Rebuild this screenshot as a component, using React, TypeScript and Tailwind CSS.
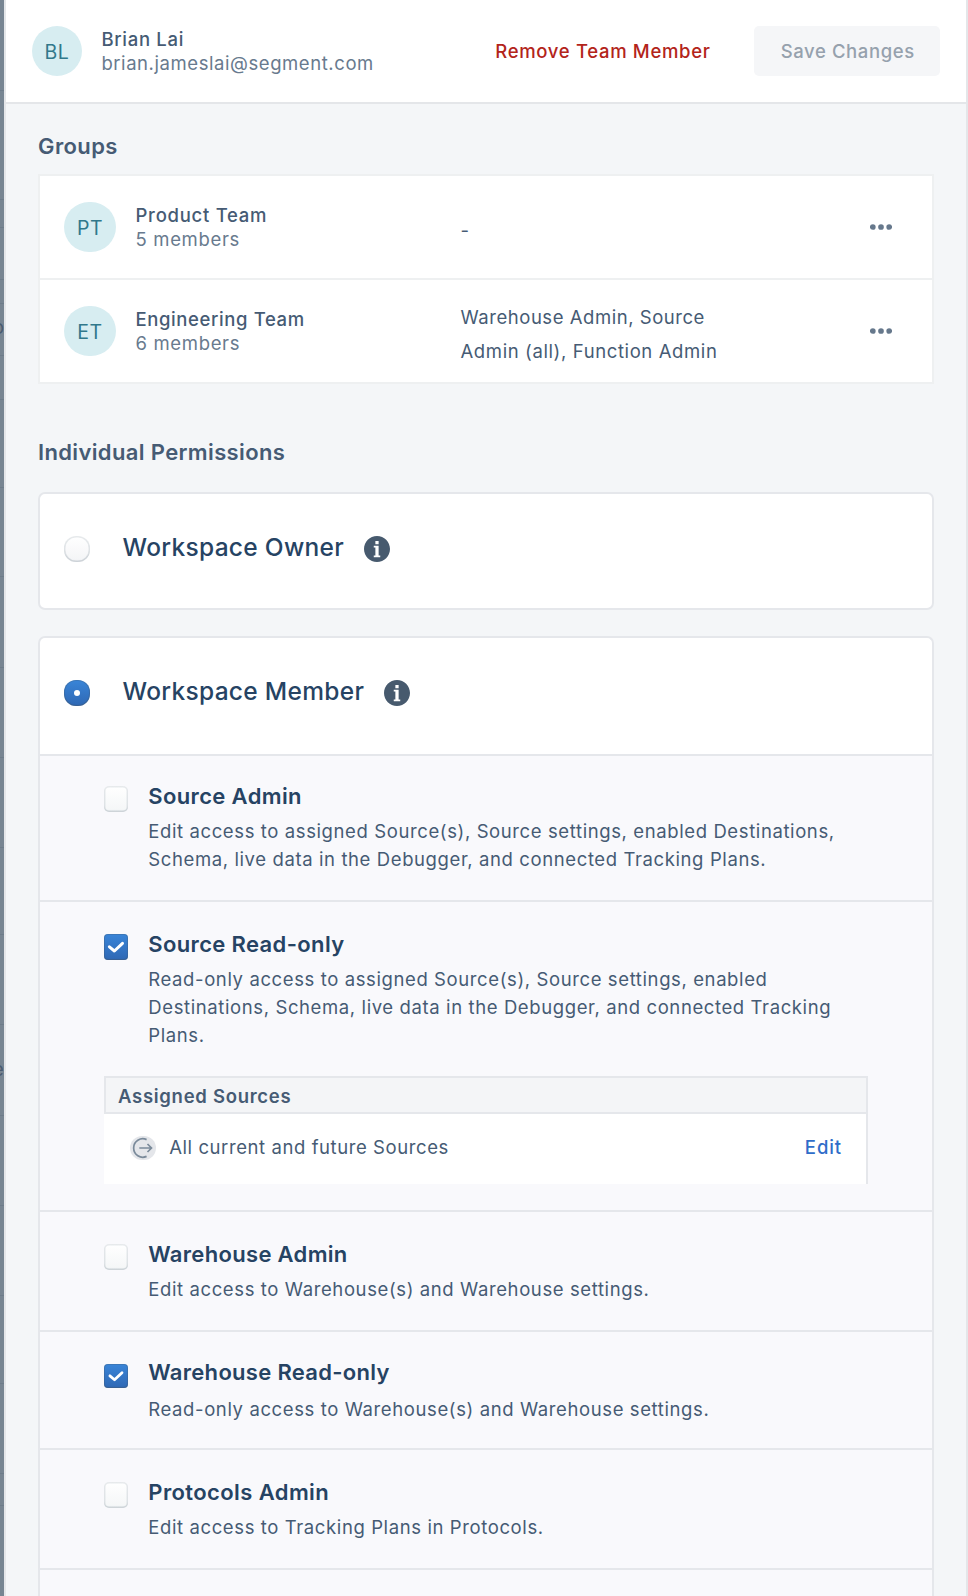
import type { ReactNode } from "react";

const dividers = [90, 199, 227, 279, 303, 355, 399, 487, 576, 667, 757, 847, 934, 1024, 1115, 1205, 1295, 1383, 1473, 1505];

function Backdrop() {
  return (
    <div className="relative w-1 shrink-0 overflow-hidden bg-[#778592] text-[18.5px] leading-6 text-[#4a5b70]">
      {dividers.map((y) => (
        <div key={y} className="absolute left-0 h-px w-1 bg-[#6d7c8a]" style={{ top: y }} />
      ))}
      <span className="absolute -left-[7px] top-[315px]">o</span>
      <span className="absolute -left-[10px] top-[880px]">n</span>
      <span className="absolute -left-[7px] top-[1057px]">e</span>
    </div>
  );
}

function Avatar({ initials, wide }: { initials: string; wide?: boolean }) {
  return (
    <div
      className={`flex h-[50px] shrink-0 items-center justify-center rounded-full bg-[#d7edf1] pt-[4px] text-[19.5px] tracking-[0.6px] text-[#31788b] ${wide ? "w-[52px]" : "w-[50px]"}`}
    >
      {initials}
    </div>
  );
}

function Dots() {
  return (
    <svg className="h-[6px] w-[22px] fill-[#66788c]" viewBox="0 0 22 6">
      <circle cx="2.8" cy="3" r="2.85" />
      <circle cx="11" cy="3" r="2.85" />
      <circle cx="19.2" cy="3" r="2.85" />
    </svg>
  );
}

function GroupRow({ initials, name, members, nameClass, children }: { initials: string; name: string; members: string; nameClass: string; children: ReactNode }) {
  return (
    <div className="box-content flex h-[102px] items-center pl-6 pr-10">
      <Avatar initials={initials} wide />
      <div className="ml-[19.5px] w-[325px] leading-6">
        <div className={`font-medium text-[#465b74] ${nameClass}`}>{name}</div>
        <div className="tracking-[0.66px] text-[#687a8e]">{members}</div>
      </div>
      <div className="flex-1 pt-[6px] leading-[34px] text-[#465b74]">{children}</div>
      <Dots />
    </div>
  );
}

function InfoIcon() {
  return (
    <svg className="h-[26px] w-[26px] shrink-0 fill-[#475a6e]" viewBox="0 0 16 16">
      <path fillRule="evenodd" d="M8 0C3.58 0 0 3.58 0 8s3.58 8 8 8 8-3.58 8-8-3.58-8-8-8zM7 3h2v2H7V3zm3 10H6v-1h1V7H6V6h3v6h1v1z" />
    </svg>
  );
}

function Radio({ checked }: { checked?: boolean }) {
  return checked ? (
    <div className="flex h-[26px] w-[26px] shrink-0 items-center justify-center rounded-[12px] bg-linear-to-b from-[#3985d8] to-[#2f68b4] shadow-[inset_0_0_0_1px_rgba(67,90,111,0.3),inset_0_-1px_1px_rgba(67,90,111,0.3)]">
      <div className="h-[6px] w-[6px] rounded-full bg-white" />
    </div>
  ) : (
    <div className="h-[26px] w-[26px] shrink-0 rounded-[12px] bg-linear-to-b from-white to-[#f3f4f6] shadow-[inset_0_0_0_1.5px_rgba(67,90,111,0.13),inset_0_-1.5px_1px_rgba(67,90,111,0.1)]" />
  );
}

function Checkbox({ checked, className }: { checked?: boolean; className: string }) {
  return checked ? (
    <div className={`w-6 shrink-0 rounded-[4px] bg-linear-to-b from-[#3985d8] to-[#2f68b4] shadow-[inset_0_0_0_1px_rgba(67,90,111,0.3),inset_0_-1px_1px_rgba(67,90,111,0.3)] ${className}`}>
      <svg className="h-full w-6" viewBox="0 0 24 26" fill="none" stroke="white" strokeWidth="3" strokeLinecap="round" strokeLinejoin="round">
        <path d="M5.4 12.8l5 4.2 8.1-7.6" />
      </svg>
    </div>
  ) : (
    <div className={`w-6 shrink-0 rounded-[5px] bg-linear-to-b from-white to-[#f4f6f7] shadow-[inset_0_0_0_1.5px_rgba(67,90,111,0.13),inset_0_-1.5px_1px_rgba(67,90,111,0.1)] ${className}`} />
  );
}

function RoleHeader({ title, checked, className }: { title: string; checked?: boolean; className: string }) {
  return (
    <div className={`flex items-start pl-6 pt-[42px] ${className}`}>
      <Radio checked={checked} />
      <div className="-mt-[5px] ml-[32.5px] mr-5 text-[24.5px] font-medium leading-8 tracking-[0.31px] text-[#264363]">{title}</div>
      <InfoIcon />
    </div>
  );
}

function Permission({ title, lines, checked, className, boxClass, titleClass = "tracking-[0.36px]", gap = "mt-[6px]", children }: {
  title: string; lines: string[]; checked?: boolean; className: string; boxClass: string; titleClass?: string; gap?: string; children?: ReactNode;
}) {
  return (
    <div className={`border-t-2 border-[#e5e7eb] bg-[#f9f9fc] pl-16 ${className}`}>
      <div className="flex items-start">
        <Checkbox checked={checked} className={boxClass} />
        <div className="ml-[20.3px] whitespace-nowrap">
          <div className={`text-[22px] font-semibold leading-[30px] text-[#264363] ${titleClass}`}>{title}</div>
          <div className={`leading-7 tracking-[0.607px] text-[#465b74] ${gap}`}>
            {lines.map((l) => (
              <div key={l}>{l}</div>
            ))}
          </div>
        </div>
      </div>
      {children}
    </div>
  );
}

function AssignedSources() {
  return (
    <div className="mt-[27px] w-[764px]">
      <div className="h-[38px] border-2 border-[#e5e7eb] bg-[#f4f5f7] pl-3 font-semibold leading-[36px] tracking-[0.71px] text-[#465b74]">Assigned Sources</div>
      <div className="flex h-[70px] items-center border-r-2 border-[#e5e7eb] bg-white pb-[2px] pl-[26px] pr-[24px]">
        <svg className="h-6 w-[26px]" viewBox="0 0 26 24" fill="none" stroke="#7a8a9a" strokeWidth="1.7">
          <rect width="26" height="24" rx="12" fill="#e4e6ea" stroke="none" />
          <path d="M16.6 3.6A9.2 9.2 0 1 0 16.6 20.4M9.3 12H21.3M17.5 8L21.5 12L17.5 16" />
        </svg>
        <span className="ml-[13.2px] flex-1 tracking-[0.58px] text-[#465b74]">All current and future Sources</span>
        <span className="font-medium tracking-[0.9px] text-[#2f6dc9]">Edit</span>
      </div>
    </div>
  );
}

export default function App() {
  return (
    <div className="flex h-[1596px] w-[968px] overflow-hidden whitespace-nowrap bg-[#f4f6f8] font-['Inter',sans-serif] text-[18.5px]">
      <Backdrop />
      <div className="flex min-w-0 flex-1 flex-col border-x-2 border-[#e4e6e9]">
        <header className="flex h-[104px] shrink-0 items-center border-b-2 border-[#e4e6e9] bg-white pl-[26px] pr-[26px]">
          <Avatar initials="BL" />
          <div className="ml-[19.4px] flex-1 leading-6">
            <div className="font-medium tracking-[0.7px] text-[#465b74]">Brian Lai</div>
            <div className="tracking-[0.57px] text-[#687a8e]">brian.jameslai@segment.com</div>
          </div>
          <button className="mr-[43.5px] pt-[2px] font-medium tracking-[0.67px] text-[#b3241a]">Remove Team Member</button>
          <button className="h-[50px] w-[186px] rounded-[5px] bg-[#f5f6f8] pl-[1.5px] pt-[2px] font-medium tracking-[0.6px] text-[#96a1ad]">Save Changes</button>
        </header>

        <main className="flex flex-col px-8">
          <h2 className="mt-[27px] text-[22px] font-semibold leading-[30px] tracking-[0.4px] text-[#465b74]">Groups</h2>
          <section className="mt-[13px] divide-y-2 divide-[#eef0f1] border-2 border-[#eef0f1] bg-white">
            <GroupRow initials="PT" name="Product Team" members="5 members" nameClass="tracking-[0.73px]">-</GroupRow>
            <GroupRow initials="ET" name="Engineering Team" members="6 members" nameClass="tracking-[0.61px]">
              <div className="tracking-[0.54px]">Warehouse Admin, Source</div>
              <div className="tracking-[0.61px]">Admin (all), Function Admin</div>
            </GroupRow>
          </section>

          <h2 className="mt-[53px] text-[22px] font-semibold leading-[30px] tracking-[0.36px] text-[#465b74]">Individual Permissions</h2>
          <section className="mt-[25px] rounded-[7px] border-2 border-[#e5e7eb] bg-white">
            <RoleHeader title="Workspace Owner" className="h-[114px]" />
          </section>

          <section className="mt-[26px] overflow-hidden rounded-t-[7px] border-2 border-b-0 border-[#e5e7eb] bg-white">
            <RoleHeader title="Workspace Member" checked className="h-[116px]" />
            <Permission
              title="Source Admin"
              className="h-[146px] pt-[25px]"
              boxClass="mt-[5px] h-[26px]"
              lines={["Edit access to assigned Source(s), Source settings, enabled Destinations,", "Schema, live data in the Debugger, and connected Tracking Plans."]}
            />
            <Permission
              title="Source Read-only"
              checked
              className="h-[310px] pt-[27px]"
              boxClass="mt-[5px] h-[26px]"
              lines={["Read-only access to assigned Source(s), Source settings, enabled", "Destinations, Schema, live data in the Debugger, and connected Tracking", "Plans."]}
            >
              <AssignedSources />
            </Permission>
            <Permission title="Warehouse Admin" className="h-[120px] pt-[27px]" boxClass="mt-[5px] h-[26px]" titleClass="tracking-[0.32px]" lines={["Edit access to Warehouse(s) and Warehouse settings."]} />
            <Permission title="Warehouse Read-only" checked className="h-[118px] pt-[25px]" boxClass="mt-[7px] h-6" titleClass="tracking-[0.3px]" gap="mt-[8px]" lines={["Read-only access to Warehouse(s) and Warehouse settings."]} />
            <Permission title="Protocols Admin" className="h-[120px] pt-[27px]" boxClass="mt-[5px] h-[26px]" titleClass="tracking-[0.4px]" lines={["Edit access to Tracking Plans in Protocols."]} />
            <div className="h-[60px] border-t-2 border-[#e5e7eb] bg-[#f9f9fc]" />
          </section>
        </main>
      </div>
    </div>
  );
}
